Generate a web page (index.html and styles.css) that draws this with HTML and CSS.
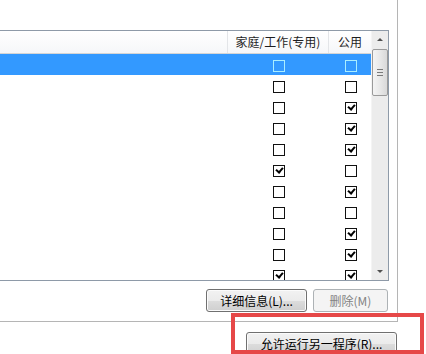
FILE: index.html
```html
<html>
<head>
<meta charset="utf-8" />
<title>允许的程序和功能</title>
<link rel="stylesheet" href="styles.css">
</head>
<body>
<div class="panel">
	<div class="listbox">
		<div class="list">
			<div class="head">
				<div class="hcell"></div>
				<div class="hcell">家庭/工作(专用)</div>
				<div class="hcell">公用</div>
			</div>
			<div class="row sel"><span></span><span class="cell"><i class="cb"></i></span><span class="cell"><i class="cb"></i></span></div>
			<div class="row"><span></span><span class="cell"><i class="cb"></i></span><span class="cell"><i class="cb"></i></span></div>
			<div class="row"><span></span><span class="cell"><i class="cb"></i></span><span class="cell"><i class="cb on"></i></span></div>
			<div class="row"><span></span><span class="cell"><i class="cb"></i></span><span class="cell"><i class="cb on"></i></span></div>
			<div class="row"><span></span><span class="cell"><i class="cb"></i></span><span class="cell"><i class="cb on"></i></span></div>
			<div class="row"><span></span><span class="cell"><i class="cb on"></i></span><span class="cell"><i class="cb"></i></span></div>
			<div class="row"><span></span><span class="cell"><i class="cb"></i></span><span class="cell"><i class="cb on"></i></span></div>
			<div class="row"><span></span><span class="cell"><i class="cb"></i></span><span class="cell"><i class="cb"></i></span></div>
			<div class="row"><span></span><span class="cell"><i class="cb"></i></span><span class="cell"><i class="cb on"></i></span></div>
			<div class="row"><span></span><span class="cell"><i class="cb"></i></span><span class="cell"><i class="cb on"></i></span></div>
			<div class="row"><span></span><span class="cell"><i class="cb on"></i></span><span class="cell"><i class="cb on"></i></span></div>
		</div>
		<div class="vscroll">
			<div class="arrow"><span class="tri up"></span></div>
			<div class="thumb"><span class="grip"></span></div>
			<div class="track"></div>
			<div class="arrow"><span class="tri down"></span></div>
		</div>
	</div>
	<div class="actions">
		<button class="btn details">详细信息(L)...</button>
		<button class="btn remove" disabled>删除(M)</button>
	</div>
</div>
<div class="footer">
	<button class="btn allow">允许运行另一程序(R)...</button>
</div>
<div class="mark"></div>
</body>
</html>
```

FILE: styles.css
```css
body {
	margin: 0;
	background: #fff;
	font-family: "Noto Sans CJK SC", "DejaVu Sans", sans-serif;
	font-size: 12px;
	color: #1e1e1e;
	position: relative;
	height: 354px;
	overflow: hidden;
}

.panel {
	width: 397px;
	height: 322px;
	box-sizing: border-box;
	padding-top: 30px;
	border-right: 1px solid #b5b5b5;
	border-bottom: 1px solid #b5b5b5;
	width: 398px;
}

.listbox {
	width: 389px;
	height: 251px;
	box-sizing: border-box;
	border: 1px solid #8e9aa8;
	border-left: none;
	display: flex;
	overflow: hidden;
}

.list {
	flex: 1;
	overflow: hidden;
}

.head {
	display: grid;
	grid-template-columns: 228px 101px 42px;
	height: 22px;
	border-bottom: 1px solid #d5d5d5;
	background: linear-gradient(#ffffff, #f6f7f9);
}

.hcell {
	border-right: 1px solid #e3e5e8;
	text-align: center;
	line-height: 22px;
	color: #1e1e1e;
	white-space: nowrap;
}

.hcell:last-child {
	border-right: none;
}

.row {
	display: grid;
	grid-template-columns: 228px 101px 42px;
	height: 21px;
}

.row.sel {
	background: #3399ff;
}

.cell {
	display: flex;
	justify-content: center;
	padding-top: 6px;
	box-sizing: border-box;
}

.cell + .cell {
	padding-left: 2px;
}

.cb {
	display: block;
	width: 12px;
	height: 12px;
	box-sizing: border-box;
	border: 1px solid #111;
	position: relative;
}

.sel .cb {
	border-color: #aaeeff;
}

.cb.on::after {
	content: "";
	position: absolute;
	left: 2px;
	top: 1px;
	width: 5px;
	height: 3px;
	border-left: 2px solid #000;
	border-bottom: 2px solid #000;
	transform: rotate(-50deg);
}

.vscroll {
	width: 17px;
	display: flex;
	flex-direction: column;
	background: #ececec;
	border-left: 1px solid #f4f4f4;
	box-sizing: border-box;
}

.arrow {
	height: 17px;
	display: flex;
	align-items: center;
	justify-content: center;
}

.tri {
	width: 0;
	height: 0;
	border-left: 3px solid transparent;
	border-right: 3px solid transparent;
}

.tri.up {
	border-bottom: 3px solid #505050;
}

.tri.down {
	border-top: 3px solid #505050;
}

.thumb {
	height: 45px;
	margin: 1px 0 0 0;
	border: 1px solid #9a9a9a;
	border-radius: 2px;
	background: linear-gradient(to right, #f4f4f4, #e8e8e8 50%, #d9d9d9);
	display: flex;
	align-items: center;
	justify-content: center;
}

.grip {
	width: 6px;
	height: 7px;
	background: repeating-linear-gradient(#7a7a7a 0 1px, transparent 1px 3px);
}

.track {
	flex: 1;
}

.actions {
	display: flex;
	justify-content: flex-end;
	gap: 6px;
	margin-top: 8px;
	padding-right: 9px;
}

.btn {
	height: 23px;
	padding: 0;
	border: 1px solid #707070;
	border-radius: 3px;
	background: linear-gradient(#f2f2f2 0%, #ebebeb 50%, #dddddd 50%, #cfcfcf 100%);
	box-shadow: inset 0 0 0 1px #fbfbfb;
	font-family: "Noto Sans CJK SC", "DejaVu Sans", sans-serif;
	font-size: 12px;
	color: #000;
}

.btn:disabled {
	border-color: #adb2b5;
	background: #f4f4f4;
	box-shadow: none;
	color: #838383;
}

.details {
	width: 101px;
}

.remove {
	width: 75px;
}

.footer {
	display: flex;
	justify-content: flex-end;
	margin-top: 10px;
	padding-right: 29px;
}

.allow {
	width: 151px;
}

.mark {
	position: absolute;
	left: 231px;
	top: 313px;
	width: 193px;
	height: 41px;
	box-sizing: border-box;
	border: 4px solid #e64848;
}
```
